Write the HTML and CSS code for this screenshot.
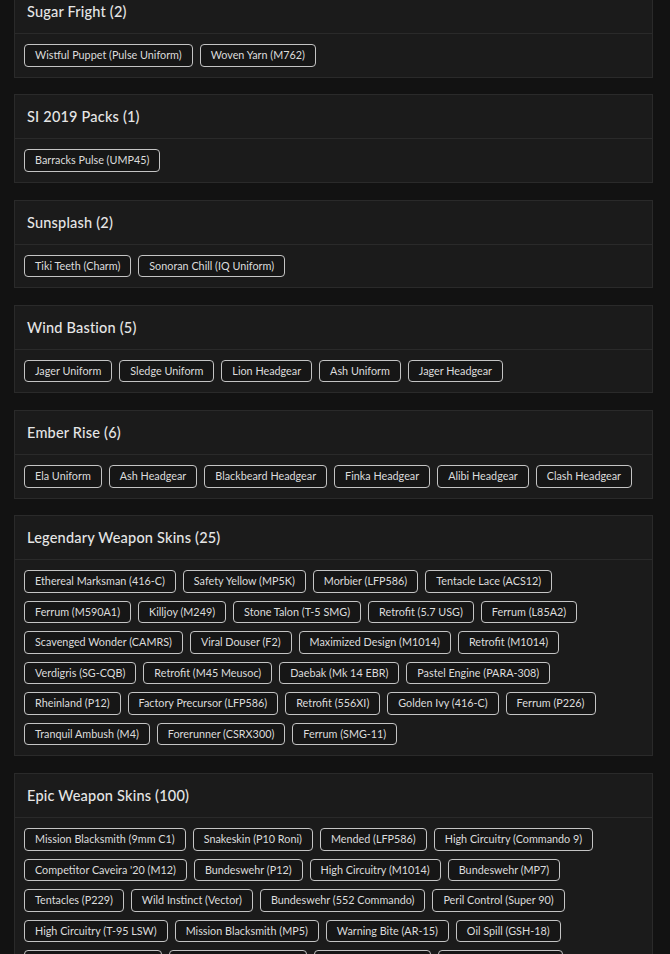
FILE: index.html
```html
<!DOCTYPE html>
<html lang="en">
<head>
  <meta charset="UTF-8">
  <title>Skins</title>
  <link rel="stylesheet" href="styles.css">
</head>
<body>

  <div class="page">

    <div class="set">
      <h3 class="set-title">Sugar Fright (2)</h3>
      <div class="items">
        <span class="item">Wistful Puppet (Pulse Uniform)</span>
        <span class="item">Woven Yarn (M762)</span>
      </div>
    </div>

    <div class="set">
      <h3 class="set-title">SI 2019 Packs (1)</h3>
      <div class="items">
        <span class="item">Barracks Pulse (UMP45)</span>
      </div>
    </div>

    <div class="set">
      <h3 class="set-title">Sunsplash (2)</h3>
      <div class="items">
        <span class="item">Tiki Teeth (Charm)</span>
        <span class="item">Sonoran Chill (IQ Uniform)</span>
      </div>
    </div>

    <div class="set">
      <h3 class="set-title">Wind Bastion (5)</h3>
      <div class="items">
        <span class="item">Jager Uniform</span>
        <span class="item">Sledge Uniform</span>
        <span class="item">Lion Headgear</span>
        <span class="item">Ash Uniform</span>
        <span class="item">Jager Headgear</span>
      </div>
    </div>

    <div class="set">
      <h3 class="set-title">Ember Rise (6)</h3>
      <div class="items">
        <span class="item">Ela Uniform</span>
        <span class="item">Ash Headgear</span>
        <span class="item">Blackbeard Headgear</span>
        <span class="item">Finka Headgear</span>
        <span class="item">Alibi Headgear</span>
        <span class="item">Clash Headgear</span>
      </div>
    </div>

    <div class="set">
      <h3 class="set-title">Legendary Weapon Skins (25)</h3>
      <div class="items">
        <span class="item">Ethereal Marksman (416-C)</span>
        <span class="item">Safety Yellow (MP5K)</span>
        <span class="item">Morbier (LFP586)</span>
        <span class="item">Tentacle Lace (ACS12)</span>
        <span class="item">Ferrum (M590A1)</span>
        <span class="item">Killjoy (M249)</span>
        <span class="item">Stone Talon (T-5 SMG)</span>
        <span class="item">Retrofit (5.7 USG)</span>
        <span class="item">Ferrum (L85A2)</span>
        <span class="item">Scavenged Wonder (CAMRS)</span>
        <span class="item">Viral Douser (F2)</span>
        <span class="item">Maximized Design (M1014)</span>
        <span class="item">Retrofit (M1014)</span>
        <span class="item">Verdigris (SG-CQB)</span>
        <span class="item">Retrofit (M45 Meusoc)</span>
        <span class="item">Daebak (Mk 14 EBR)</span>
        <span class="item">Pastel Engine (PARA-308)</span>
        <span class="item">Rheinland (P12)</span>
        <span class="item">Factory Precursor (LFP586)</span>
        <span class="item">Retrofit (556XI)</span>
        <span class="item">Golden Ivy (416-C)</span>
        <span class="item">Ferrum (P226)</span>
        <span class="item">Tranquil Ambush (M4)</span>
        <span class="item">Forerunner (CSRX300)</span>
        <span class="item">Ferrum (SMG-11)</span>
      </div>
    </div>

    <div class="set">
      <h3 class="set-title">Epic Weapon Skins (100)</h3>
      <div class="items">
        <span class="item">Mission Blacksmith (9mm C1)</span>
        <span class="item">Snakeskin (P10 Roni)</span>
        <span class="item">Mended (LFP586)</span>
        <span class="item">High Circuitry (Commando 9)</span>
        <span class="item">Competitor Caveira '20 (M12)</span>
        <span class="item">Bundeswehr (P12)</span>
        <span class="item">High Circuitry (M1014)</span>
        <span class="item">Bundeswehr (MP7)</span>
        <span class="item">Tentacles (P229)</span>
        <span class="item">Wild Instinct (Vector)</span>
        <span class="item">Bundeswehr (552 Commando)</span>
        <span class="item">Peril Control (Super 90)</span>
        <span class="item">High Circuitry (T-95 LSW)</span>
        <span class="item">Mission Blacksmith (MP5)</span>
        <span class="item">Warning Bite (AR-15)</span>
        <span class="item">Oil Spill (GSH-18)</span>
        <span class="item">Mission Blacksmith (M4)</span>
        <span class="item">High Circuitry (Super 90)</span>
        <span class="item">Bundeswehr (G36C)</span>
        <span class="item">Tentacles (MK1 9mm)</span>
      </div>
    </div>

  </div>

</body>
</html>
```

FILE: styles.css
```css
body {
  margin: 0;
  background: #121212;
  font-family: Lato, "Open Sans", sans-serif;
}
.page {
  margin-top: -11px;
  padding: 0 17px 0 14px;
}
.set {
  background: #1b1b1b;
  border: 1px solid #2a2a2a;
  margin-bottom: 16.75px;
}
.set-title {
  margin: 0;
  padding: 0 12px;
  height: 43px;
  line-height: 43px;
  font-size: 14.5px;
  font-weight: 500;
  letter-spacing: 0.2px;
  color: #e6e6e6;
  border-bottom: 1px solid #2a2a2a;
}
.items {
  display: flex;
  flex-wrap: wrap;
  gap: 8px 7px;
  padding: 10px 9px;
}
.item {
  font-size: 10.8px;
  line-height: 14.5px;
  padding: 3px 10px;
  border: 1px solid #c4c4c4;
  border-radius: 4px;
  color: #dcdcdc;
  background: #161616;
}
```
